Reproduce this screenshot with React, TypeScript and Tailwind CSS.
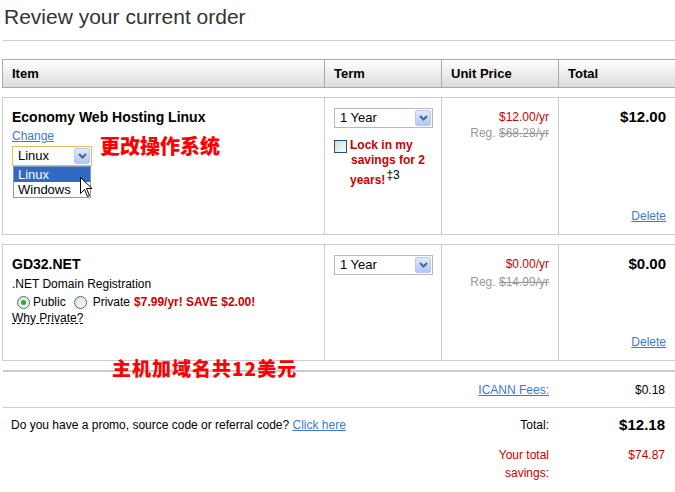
import React from "react";

const Chevron = () => (
  <svg width="9" height="6" viewBox="0 0 9 6">
    <path d="M1 1 L4.5 4.5 L8 1" fill="none" stroke="#4d6185" strokeWidth="2" />
  </svg>
);

const Select = ({ label, focus }: { label: string; focus?: boolean }) => (
  <div
    className={`flex h-[20px] items-center justify-between border pl-[5px] pr-[1px] text-[13px] text-black ${
      focus ? "border-[#e3bc63]" : "border-[#b9b9b9]"
    }`}
  >
    <span>{label}</span>
    <span className="flex h-[16px] w-[16px] items-center justify-center rounded-[2px] border border-[#b6c9f5] bg-gradient-to-b from-[#e1eafe] to-[#b1c6f6]">
      <Chevron />
    </span>
  </div>
);

const Checkbox = () => (
  <span className="mt-[2px] inline-block h-[13px] w-[13px] shrink-0 border border-[#1c5180] bg-gradient-to-br from-[#dcdcd5] to-[#fbfbf9]" />
);

const Radio = ({ checked }: { checked?: boolean }) => (
  <span className="flex h-[13px] w-[13px] shrink-0 items-center justify-center rounded-full border border-[#3f6b99] bg-gradient-to-br from-[#dcdcd5] to-white">
    {checked && <span className="h-[5px] w-[5px] rounded-full bg-[#2aaa2a]" />}
  </span>
);

const Pointer = () => (
  <svg width="13" height="21" viewBox="0 0 13 21">
    <path
      d="M0.5 0.5 L0.5 16.5 L4.5 12.5 L7.5 19.5 L9.5 18.5 L6.5 11.5 L12 11.5 Z"
      fill="white"
      stroke="black"
      strokeWidth="1"
    />
  </svg>
);

const link = "text-[#3a7bd5] underline";

export default function App() {
  return (
    <div className="relative h-[492px] w-[675px] overflow-hidden bg-white font-['Liberation_Sans',Arial,sans-serif] text-[12px] text-black">
      <div className="ml-[3px] h-[41px] border-b border-[#cccccc] pl-[1px] pt-[3px]">
        <h1 className="text-[21px] leading-[28px] text-[#333]">Review your current order</h1>
      </div>

      {/* header */}
      <div className="ml-[2px] mt-[18px] grid h-[29px] w-[690px] grid-cols-[322px_117px_117px_1fr] border border-[#a9a9a9] bg-gradient-to-b from-white to-[#dcdcdc] text-[13px] font-bold leading-[27px]">
        <div className="border-r border-[#a9a9a9] pl-[9px]">Item</div>
        <div className="border-r border-[#a9a9a9] pl-[9px]">Term</div>
        <div className="border-r border-[#a9a9a9] pl-[9px]">Unit Price</div>
        <div className="pl-[9px]">Total</div>
      </div>

      {/* row 1 */}
      <div className="ml-[2px] mt-[9px] grid h-[138px] w-[680px] grid-cols-[322px_117px_117px_1fr] border border-[#cccccc]">
        <div className="relative border-r border-[#cccccc] pl-[9px] pt-[10px]">
          <div className="text-[14px] font-bold leading-[18px]">Economy Web Hosting Linux</div>
          <div className="mt-[2px] leading-[16px]">
            <a className={link}>Change</a>
          </div>
          <div className="relative mt-[2px] w-[80px]">
            <Select label="Linux" focus />
            <div className="absolute left-[1px] top-full w-[78px] border border-[#7f9db9] bg-white text-[13px] leading-[15px]">
              <div className="bg-[#316ac5] pl-[4px] text-white">Linux</div>
              <div className="pl-[4px]">Windows</div>
            </div>
            <div className="absolute left-[68px] top-[31px]">
              <Pointer />
            </div>
          </div>
          <div className="absolute left-[97px] top-[36px] font-['Noto_Sans_CJK_SC',sans-serif] text-[20px] font-black leading-[24px] text-[#ff0000]">
            更改操作系统
          </div>
        </div>
        <div className="border-r border-[#cccccc] pl-[9px] pt-[10px]">
          <div className="w-[99px]">
            <Select label="1 Year" />
          </div>
          <div className="mt-[10px] flex gap-[3px]">
            <Checkbox />
            <div className="text-[12px] font-bold leading-[15px] text-[#cc0000]">
              <div>Lock in my</div>
              <div className="pl-[1px]">savings for 2</div>
              <div className="mt-[5px]">
                years!
                <span className="relative top-[-5px] ml-[1px] font-normal text-black">‡3</span>
              </div>
            </div>
          </div>
        </div>
        <div className="border-r border-[#cccccc] pr-[9px] pt-[11px] text-right leading-[16px]">
          <div className="text-[#cc0000]">$12.00/yr</div>
          <div className="text-[#999]">
            Reg. <span className="line-through">$68.28/yr</span>
          </div>
        </div>
        <div className="flex flex-col items-end justify-between pb-[10px] pr-[15px] pt-[10px]">
          <div className="text-[15px] font-bold leading-[18px]">$12.00</div>
          <a className={`${link} leading-[16px]`}>Delete</a>
        </div>
      </div>

      {/* row 2 */}
      <div className="ml-[2px] mt-[9px] grid h-[117px] w-[680px] grid-cols-[322px_117px_117px_1fr] border border-[#cccccc]">
        <div className="border-r border-[#cccccc] pl-[9px] pt-[10px]">
          <div className="text-[14px] font-bold leading-[18px]">GD32.NET</div>
          <div className="mt-[3px] leading-[16px]">.NET Domain Registration</div>
          <div className="mt-[2px] flex items-center leading-[16px]">
            <span className="ml-[5px]">
              <Radio checked />
            </span>
            <span className="ml-[3px]">Public</span>
            <span className="ml-[8px]">
              <Radio />
            </span>
            <span className="ml-[6px]">Private</span>
            <span className="ml-[4px] font-bold text-[#cc0000]">$7.99/yr! SAVE $2.00!</span>
          </div>
          <div className="leading-[16px]">
            <span className="underline decoration-dashed">Why Private?</span>
          </div>
        </div>
        <div className="border-r border-[#cccccc] pl-[9px] pt-[10px]">
          <div className="w-[99px]">
            <Select label="1 Year" />
          </div>
        </div>
        <div className="border-r border-[#cccccc] pr-[9px] pt-[10px] text-right leading-[18px]">
          <div className="text-[#cc0000]">$0.00/yr</div>
          <div className="text-[#999]">
            Reg. <span className="line-through">$14.99/yr</span>
          </div>
        </div>
        <div className="flex flex-col items-end justify-between pb-[10px] pr-[15px] pt-[10px]">
          <div className="text-[15px] font-bold leading-[18px]">$0.00</div>
          <a className={`${link} leading-[16px]`}>Delete</a>
        </div>
      </div>

      {/* summary */}
      <div className="relative ml-[3px] mt-[9px] border-t-2 border-[#cccccc]">
        <div className="absolute left-[109px] top-[-15px] font-['Noto_Sans_CJK_SC',sans-serif] text-[19px] font-black leading-[22px] tracking-[1px] text-[#ff0000]">
          主机加域名共12美元
        </div>
        <div className="grid h-[36px] grid-cols-[1fr_80px_116px] items-center border-b border-[#cccccc] pr-[10px]">
          <div />
          <a className={`${link} text-right`}>ICANN Fees:</a>
          <div className="text-right">$0.18</div>
        </div>
        <div className="grid grid-cols-[1fr_80px_116px] gap-y-[12px] pl-[8px] pr-[10px] pt-[8px] leading-[18px]">
          <div>
            Do you have a promo, source code or referral code? <a className={link}>Click here</a>
          </div>
          <div className="text-right">Total:</div>
          <div className="text-right text-[15px] font-bold">$12.18</div>
          <div />
          <div className="text-right text-[#cc0000]">Your total savings:</div>
          <div className="text-right text-[#cc0000]">$74.87</div>
        </div>
      </div>
    </div>
  );
}
